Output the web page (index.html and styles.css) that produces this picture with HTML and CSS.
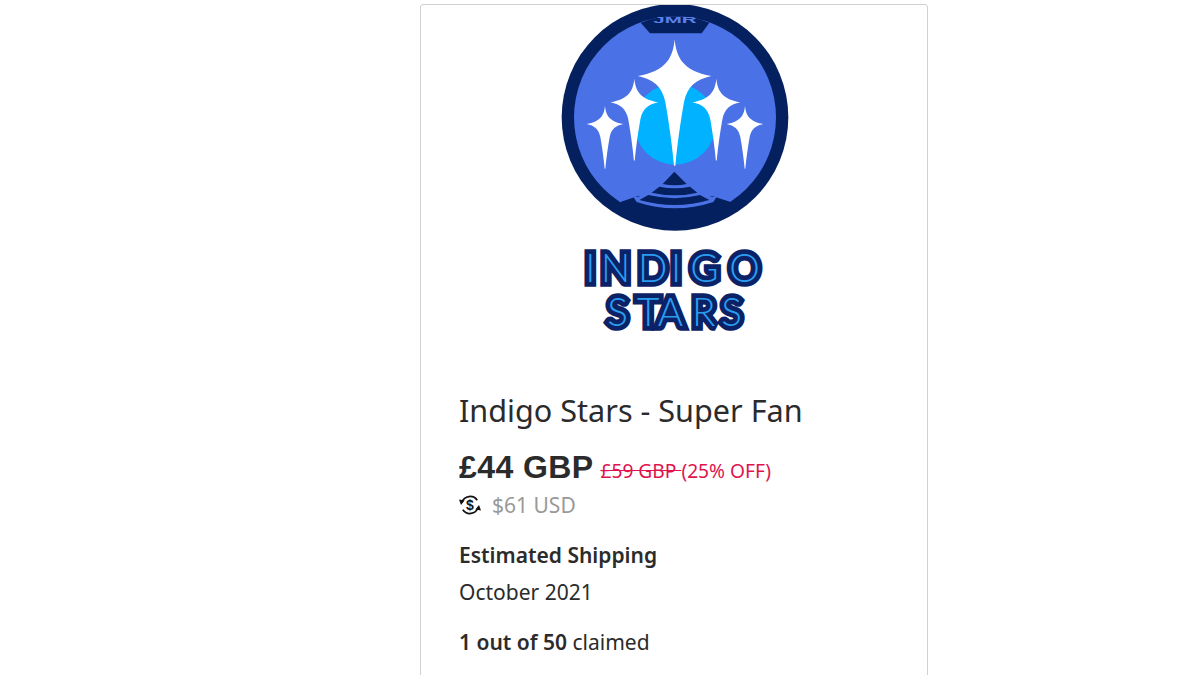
FILE: index.html
```html
<!DOCTYPE html>
<html lang="en">
<head>
<meta charset="utf-8">
<title>Indigo Stars - Super Fan</title>
<link rel="stylesheet" href="styles.css">
</head>
<body>
<main class="card">
  <div class="logo-wrap">
    <svg class="logo" viewBox="-6 15 756 1005" role="img" aria-label="Indigo Stars logo">
      <defs>
        <clipPath id="disc"><circle cx="375" cy="352" r="306"/></clipPath>
        <path id="sparkle" d="M0 -110 C5 -55 25 -15 110 0 C65 10 38 30 28 78 C17 140 7 212 2 269 L-2 269 C-7 212 -17 140 -28 78 C-38 30 -65 10 -110 0 C-25 -15 -5 -55 0 -110 Z"/>
      </defs>
      <circle class="navy" cx="375" cy="352" r="340"/>
      <circle class="blue" cx="375" cy="352" r="303"/>
      <circle class="cyan" cx="375" cy="372" r="122"/>
      <path class="navy" d="M272 68 L300 100 L455 100 L478 68 Q375 30 272 68 Z"/>
      <text class="jmr" x="310" y="68" textLength="130" lengthAdjust="spacingAndGlyphs">JMR</text>
      <g clip-path="url(#disc)">
        <path class="navy" d="M213 605 L264 588 Q375 645 486 588 L540 605 L540 700 L213 700 Z"/>
      </g>
      <path class="blue" d="M250 590 L500 590 L490 606 Q375 644 260 606 Z"/>
      <path class="navy" d="M373 515 L410 552 Q375 560 338 552 Z"/>
      <path class="navy" d="M328 560 Q375 570 420 560 L442 578 Q375 594 305 578 Z"/>
      <path class="navy" d="M295 585 Q375 604 450 585 L478 600 Q375 630 268 600 Z"/>
      <use class="star" href="#sparkle" transform="translate(374 228)"/>
      <use class="star" href="#sparkle" transform="translate(253 307) scale(.65)"/>
      <use class="star" href="#sparkle" transform="translate(499 307) scale(.65)"/>
      <use class="star" href="#sparkle" transform="translate(165 372) scale(.5)"/>
      <use class="star" href="#sparkle" transform="translate(585 372) scale(.5)"/>
      <text class="word" x="106 153 264 363 421 538" y="847">INDIGO</text>
      <text class="word" x="172 261 323 426 514" y="979">STARS</text>
    </svg>
  </div>
  <div class="details">
    <h1 class="title">Indigo Stars - Super Fan</h1>
    <div class="price-row">
      <span class="price">£44 GBP</span>
      <span class="discount"><s>£59 GBP </s>(25% OFF)</span>
    </div>
    <div class="converted">
      <svg class="fx-icon" viewBox="0 0 22 22" aria-hidden="true">
        <path class="fx-stroke" d="M3 8.2 A8.6 8.6 0 0 1 18.2 6.2"/>
        <path class="fx-stroke" d="M19 13.8 A8.6 8.6 0 0 1 3.8 15.8"/>
        <path class="fx-fill" d="M0 5.6 L5.6 6.6 L2 11 Z"/>
        <path class="fx-fill" d="M22 16.4 L16.4 15.4 L20 11 Z"/>
        <text class="fx-dollar" x="11" y="16">$</text>
      </svg>
      <span>$61 USD</span>
    </div>
    <h2 class="label">Estimated Shipping</h2>
    <p class="ship-date">October 2021</p>
    <p class="claimed"><strong>1 out of 50</strong> claimed</p>
  </div>
</main>
</body>
</html>
```
FILE: styles.css
```css
html, body {
  margin: 0;
  height: 675px;
  overflow: hidden;
  background: #fff;
}
body {
  font-family: "Noto Sans", "Liberation Sans", Arial, sans-serif;
  color: #2b2b2b;
}
.card {
  box-sizing: border-box;
  width: 508px;
  height: 700px;
  margin: 4px 0 0 420px;
  border: 1px solid #d0d0d0;
  border-radius: 3px;
}
.logo-wrap {
  display: flex;
  justify-content: center;
}
.logo {
  display: block;
  width: 252px;
  height: 335px;
}
.navy { fill: #04205e; }
.blue { fill: #4a72e6; }
.cyan { fill: #00b2ff; }
.star { fill: #fff; }
.jmr {
  font-family: "Liberation Sans", sans-serif;
  font-size: 29px;
  font-weight: 700;
  fill: #5b80ea;
}
.word {
  font-family: "Lato", "Liberation Sans", sans-serif;
  font-size: 116px;
  font-weight: 300;
  fill: #2a9df0;
  stroke: #0b2266;
  stroke-width: 29px;
  stroke-linejoin: miter;
  stroke-miterlimit: 2;
  paint-order: stroke;
}
.details {
  padding: 51px 38px 0;
}
.title {
  margin: 0;
  font-size: 30.6px;
  line-height: 38px;
  font-weight: 400;
}
.price-row {
  display: flex;
  align-items: baseline;
  gap: 7px;
  margin-top: 18px;
}
.price {
  font-family: "Liberation Sans", Arial, sans-serif;
  font-size: 32px;
  line-height: 40px;
  font-weight: 700;
  letter-spacing: .4px;
}
.discount {
  font-size: 19.2px;
  color: #e0134f;
}
.converted {
  display: flex;
  align-items: center;
  gap: 11px;
  margin-top: 5px;
  font-size: 21px;
  line-height: 26px;
  color: #999;
}
.fx-icon {
  width: 22px;
  height: 22px;
}
.fx-stroke {
  fill: none;
  stroke: #111;
  stroke-width: 1.8;
}
.fx-fill { fill: #111; }
.fx-dollar {
  font-family: "Liberation Sans", sans-serif;
  font-size: 14px;
  font-weight: 700;
  text-anchor: middle;
  fill: #111;
}
.label {
  margin: 24px 0 0;
  font-size: 21px;
  line-height: 26px;
  font-weight: 600;
}
.ship-date {
  margin: 11px 0 0;
  font-size: 21px;
  line-height: 26px;
}
.claimed {
  margin: 24px 0 0;
  font-size: 21px;
  line-height: 26px;
}
.claimed strong {
  font-weight: 600;
}
```
